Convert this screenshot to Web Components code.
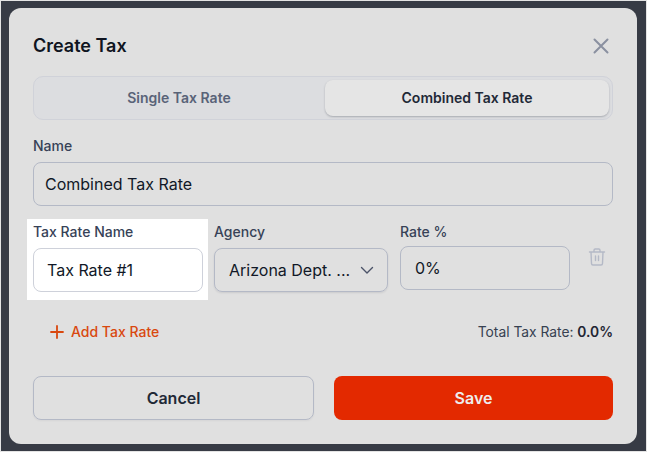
<!DOCTYPE html>
<html>
<head>
<meta charset="utf-8">
<title>Create Tax</title>
<style>
  html, body { margin: 0; height: 100%; }
  body { font-family: Inter, "Liberation Sans", sans-serif; background: #373b45; }
</style>
</head>
<body>
<tax-dialog heading="Create Tax">
  <tax-tabs></tax-tabs>
  <tax-field label="Name" value="Combined Tax Rate"></tax-field>
  <div slot="rates">
    <tax-field label="Tax Rate Name" value="Tax Rate #1" highlight></tax-field>
    <tax-field label="Agency" value="Arizona Dept. ..." select></tax-field>
    <tax-field label="Rate %" value="0%" raised></tax-field>
    <tax-trash></tax-trash>
  </div>
</tax-dialog>

<script>
  class TaxDialog extends HTMLElement {
    constructor() {
      super();
      this.attachShadow({ mode: "open" });
    }

    connectedCallback() {
      this.shadowRoot.innerHTML = `
        <style>
          * { box-sizing: border-box; margin: 0; padding: 0; }
          :host {
            display: block;
            width: 647px;
            height: 452px;
            padding: 7px 8px 7px 8px;
            border: 1px solid #e4e4e4;
            box-sizing: border-box;
            background: #373b45;
          }
          .modal {
            height: 436px;
            width: 628px;
            background: #e0e0e0;
            border-radius: 12px;
            padding: 24px 24px 0;
          }
          .head {
            display: flex;
            justify-content: space-between;
            align-items: center;
            height: 28px;
            margin-bottom: 16px;
          }
          h2 { font-size: 18px; font-weight: 600; color: #0f1420; line-height: 28px; }
          .close { display: block; width: 24px; height: 24px; }
          ::slotted(tax-tabs) { margin-bottom: 16px; }
          ::slotted([slot="rates"]) {
            display: flex;
            gap: 11px;
            margin-top: 16px;
          }
          .totals {
            display: flex;
            justify-content: space-between;
            align-items: center;
            height: 24px;
            margin-top: 28px;
            padding-left: 16px;
          }
          .add { display: flex; align-items: center; gap: 6px; color: #d9480f; font-size: 14px; font-weight: 500; }
          .add span { position: relative; top: -0.5px; }
          .add svg { display: block; }
          .total { font-size: 13.8px; color: #374151; }
          .total b { font-weight: 600; color: #1f2533; }
          .foot { display: flex; gap: 20px; margin-top: 32px; }
          .btn {
            flex: 1 1 0;
            height: 44px;
            border-radius: 8px;
            font: 600 16px Inter, "Liberation Sans", sans-serif;
            display: flex;
            align-items: center;
            justify-content: center;
          }
          .cancel { border: 1px solid #b4b9c6; color: #1f2937; box-shadow: 0 1px 2px rgba(16,24,40,.05); }
          .save { background: #e32900; color: #eee; }
        </style>
        <div class="modal">
          <div class="head">
            <h2>${this.getAttribute("heading")}</h2>
            <svg class="close" viewBox="0 0 24 24" fill="none" stroke="#8a90a0" stroke-width="2" stroke-linecap="round">
              <path d="M5.5 5.5l13 13M18.5 5.5l-13 13"/>
            </svg>
          </div>
          <slot></slot>
          <slot name="rates"></slot>
          <div class="totals">
            <div class="add">
              <svg width="16" height="16" viewBox="0 0 16 16" fill="none" stroke="#d9480f" stroke-width="1.8" stroke-linecap="round">
                <path d="M8 2v12M2 8h12"/>
              </svg>
              <span>Add Tax Rate</span>
            </div>
            <div class="total">Total Tax Rate: <b>0.0%</b></div>
          </div>
          <div class="foot">
            <div class="btn cancel">Cancel</div>
            <div class="btn save">Save</div>
          </div>
        </div>
      `;
    }
  }

  class TaxTabs extends HTMLElement {
    constructor() {
      super();
      this.attachShadow({ mode: "open" });
    }

    connectedCallback() {
      this.shadowRoot.innerHTML = `
        <style>
          * { box-sizing: border-box; }
          :host {
            display: flex;
            gap: 4px;
            height: 44px;
            padding: 3px;
            background: #dcdde0;
            border: 1px solid #d0d2d9;
            border-radius: 10px;
            box-sizing: border-box;
            font-size: 14px;
            font-weight: 600;
          }
          div { flex: 1 1 0; display: flex; align-items: center; justify-content: center; border-radius: 8px; padding-bottom: 1px; }
          .off { color: #596378; }
          .on { background: #e5e5e5; color: #1f2937; box-shadow: 0 1px 2px rgba(16,24,40,.25); }
        </style>
        <div class="off">Single Tax Rate</div>
        <div class="on">Combined Tax Rate</div>
      `;
    }
  }

  class TaxField extends HTMLElement {
    constructor() {
      super();
      this.attachShadow({ mode: "open" });
    }

    connectedCallback() {
      const isSelect = this.hasAttribute("select");
      const chevron = isSelect
        ? `<svg width="16" height="16" viewBox="0 0 16 16" fill="none" stroke="#4b5368" stroke-width="1.4" stroke-linecap="round" stroke-linejoin="round"><path d="M2.5 5.5L8 11l5.5-5.5"/></svg>`
        : "";
      this.shadowRoot.innerHTML = `
        <style>
          * { box-sizing: border-box; }
          :host { display: block; box-sizing: border-box; }
          :host([select]) { width: 174px; }
          :host([raised]) { width: 170px; margin-left: 1px; }
          :host([highlight]) {
            width: 181px;
            margin: -3px -5px -8px -6px;
            padding: 3px 5px 8px 6px;
            background: #fff;
          }
          label { display: block; font-size: 14px; line-height: 20px; font-weight: 500; color: #374257; margin-bottom: 6px; }
          :host([raised]) .box { margin-top: -2px; }
          .box {
            height: 44px;
            border: 1px solid #b4b9c6;
            border-radius: 8px;
            display: flex;
            align-items: center;
            justify-content: space-between;
            padding: 0 14px 0 11px;
            font-size: 16px;
            color: #111827;
            white-space: nowrap;
          }
          :host([highlight]) .box { border-color: #ced1da; padding-left: 13px; }
          :host([select]) .box { padding-left: 14px; padding-right: 12px; box-shadow: 0 1px 2px rgba(16,24,40,.1); }
          :host([raised]) .box { padding-left: 14px; }
        </style>
        <label>${this.getAttribute("label")}</label>
        <div class="box"><span>${this.getAttribute("value")}</span>${chevron}</div>
      `;
    }
  }

  class TaxTrash extends HTMLElement {
    constructor() {
      super();
      this.attachShadow({ mode: "open" });
    }

    connectedCallback() {
      this.shadowRoot.innerHTML = `
        <style>
          :host { display: block; width: 18px; padding-top: 25px; margin-left: 7px; }
          svg { display: block; }
        </style>
        <svg width="18" height="20" viewBox="0 0 18 20" fill="none" stroke="#b4b9c6" stroke-width="1.4" stroke-linecap="round" stroke-linejoin="round">
          <path d="M1.5 5h15M6 5V3.2C6 2.5 6.5 2 7.2 2h3.6c.7 0 1.2.5 1.2 1.2V5M3 5l.5 11.5c0 .9.7 1.5 1.5 1.5h8c.8 0 1.5-.6 1.5-1.5L15 5M7.5 9v4.5M10.5 9v4.5"/>
        </svg>
      `;
    }
  }

  customElements.define("tax-dialog", TaxDialog);
  customElements.define("tax-tabs", TaxTabs);
  customElements.define("tax-field", TaxField);
  customElements.define("tax-trash", TaxTrash);
</script>
</body>
</html>
